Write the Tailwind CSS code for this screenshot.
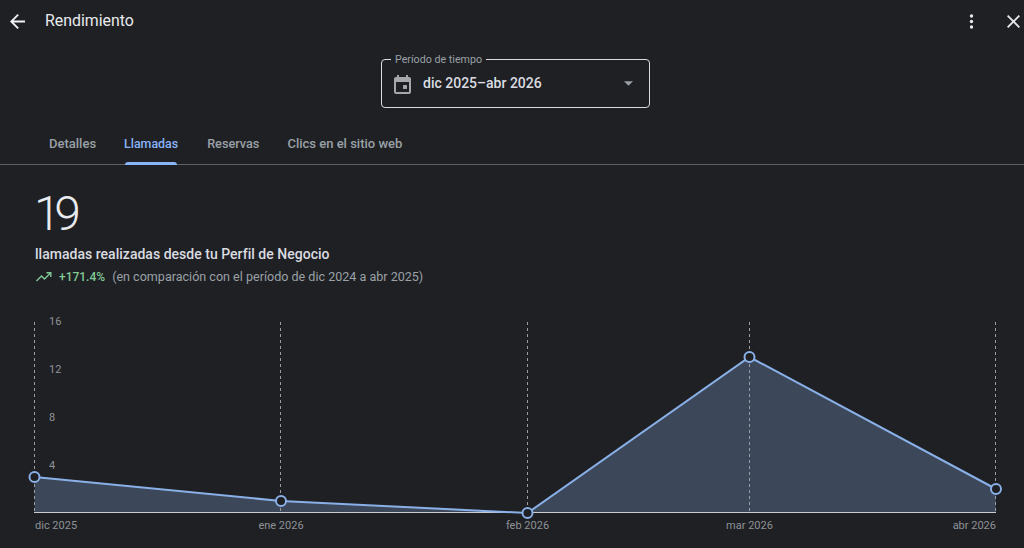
<!DOCTYPE html>
<html lang="es">
<head>
<meta charset="utf-8">
<title>Rendimiento</title>
<script src="https://cdn.jsdelivr.net/npm/@tailwindcss/browser@4"></script>
</head>
<body class="m-0 bg-[#1f2024]">
<div class="w-[1024px] h-[548px] overflow-hidden flex flex-col bg-[#1f2024] font-['Roboto',sans-serif] text-[#e8eaed]">
  <header class="h-[42px] flex items-center pl-[10px] pr-[3px] shrink-0">
    <svg class="w-[15px] h-[15px] mr-[20px]" viewBox="0 0 16 16" fill="#f1f3f4"><path d="M16 7H3.800l5.600-5.600L8 0 0 8l8 8 1.400-1.400L3.800 9H16z"/></svg>
    <h1 class="text-[15.9px] font-normal leading-6 text-[#e8eaed] flex-1">Rendimiento</h1>
    <svg class="w-[5px] h-[15px] mr-[33px]" viewBox="0 0 5 15" fill="#e8eaed"><circle cx="2.500" cy="2" r="1.700"/><circle cx="2.500" cy="7.500" r="1.700"/><circle cx="2.500" cy="13" r="1.700"/></svg>
    <svg class="w-[13px] h-[13px] mr-[1px]" viewBox="0 0 14 14" fill="#e8eaed"><path d="M14 1.400 12.600 0 7 5.600 1.400 0 0 1.400 5.600 7 0 12.600 1.400 14 7 8.400l5.600 5.600 1.400-1.400L8.400 7z"/></svg>
  </header>

  <div class="flex justify-center pt-[17px] pl-[7px] shrink-0">
    <div class="relative w-[269px] h-[49px] border border-[#dadce0] rounded-[4px] flex items-center pl-[12px] pr-[16px]">
      <span class="absolute left-[9px] -top-[7px] px-[4px] bg-[#1f2024] text-[10.7px] leading-[13px] text-[#9aa0a6]">Período de tiempo</span>
      <svg class="w-[17px] h-[19px] mr-[12px] mt-[1px]" viewBox="0 0 17 19" fill="#a4a8ad"><path d="M15 2h-1V0h-2v2H5V0H3v2H2C.9 2 0 2.900 0 4v13c0 1.100.9 2 2 2h13c1.100 0 2-.9 2-2V4c0-1.100-.9-2-2-2zm0 15H2V7h13v10z"/><rect x="9" y="10" width="4" height="4" rx=".4"/></svg>
      <span class="text-[14px] font-medium leading-5 text-[#dadce0] flex-1 -mt-[1px]">dic 2025–abr 2026</span>
      <svg class="w-[9px] h-[5px]" viewBox="0 0 10 5" fill="#9aa0a6"><path d="M0 0l5 5 5-5z"/></svg>
    </div>
  </div>

  <nav class="mt-[20px] h-[37px] border-b border-[#5f6368] flex items-stretch pl-[49px] gap-[28px] shrink-0 text-[13px] font-medium">
    <a class="pt-[6px] leading-5 text-[#9aa0a6]">Detalles</a>
    <a class="relative pt-[6px] leading-5 text-[12.4px] text-[#8ab4f8]">Llamadas<span class="absolute left-[1px] right-[1px] -bottom-[1px] h-[3px] rounded-t-[3px] bg-[#8ab4f8]"></span></a>
    <a class="pt-[6px] ml-[1px] leading-5 text-[12.7px] text-[#9aa0a6]">Reservas</a>
    <a class="pt-[6px] leading-5 text-[#9aa0a6]">Clics en el sitio web</a>
  </nav>

  <section class="pl-[35px] pt-[21px] shrink-0">
    <div class="text-[48px] font-light leading-[56px] tracking-[-6.500px] -ml-[1px] text-[#e8eaed]">19</div>
    <p class="mt-[2px] text-[14px] font-medium leading-5 text-[#dadce0] tracking-[0.02px]">llamadas realizadas desde tu Perfil de Negocio</p>
    <div class="mt-[5px] flex items-center text-[12px] leading-[16px]">
      <svg class="w-[16px] h-[10px] ml-[1px] mr-[7px]" viewBox="0 0 16 10" fill="none" stroke="#81c995" stroke-width="1.400"><path d="M.5 9l5-5 3 3 6-6"/><path d="M10.500 .7h4.300V5"/></svg>
      <span class="font-medium text-[#81c995] mr-[7px]">+171.4%</span>
      <span class="text-[12.55px] text-[#9aa0a6]">(en comparación con el período de dic 2024 a abr 2025)</span>
    </div>
  </section>

  <div class="relative flex-1">
    <svg class="absolute left-0 top-0 w-[1024px] h-[263px]" viewBox="0 285 1024 263" font-family="Roboto, sans-serif">
      <path d="M34.500 477 281 501 527.500 513 749.500 357 996 489V513H34.500Z" fill="#3c4759"/>
      <g stroke="#9a9ea4" stroke-width="1" stroke-dasharray="3 3" fill="none">
        <path d="M34.500 322V513"/><path d="M280.500 322V513"/><path d="M527.500 322V513"/><path d="M749.500 322V513"/><path d="M995.500 322V513"/>
      </g>
      <path d="M34 512.500H996" stroke="#c9ccd2" stroke-width="1"/>
      <path d="M34.500 477 281 501 527.500 513 749.500 357 996 489" fill="none" stroke="#8ab0e8" stroke-width="2"/>
      <g fill="#1f2024" stroke="#8ab0e8" stroke-width="2">
        <circle cx="34.500" cy="477" r="5"/><circle cx="281" cy="501" r="5"/><circle cx="527.500" cy="513" r="5"/><circle cx="749.500" cy="357" r="5"/><circle cx="996" cy="489" r="5"/>
      </g>
      <g font-size="11" fill="#8e9297">
        <text x="49" y="325">16</text><text x="49" y="373">12</text><text x="49" y="421">8</text><text x="49" y="469">4</text>
        <text x="35" y="529">dic 2025</text>
        <text x="281" y="529" text-anchor="middle">ene 2026</text>
        <text x="527.500" y="529" text-anchor="middle">feb 2026</text>
        <text x="749.500" y="529" text-anchor="middle">mar 2026</text>
        <text x="996" y="529" text-anchor="end">abr 2026</text>
      </g>
    </svg>
  </div>
</div>
</body>
</html>
